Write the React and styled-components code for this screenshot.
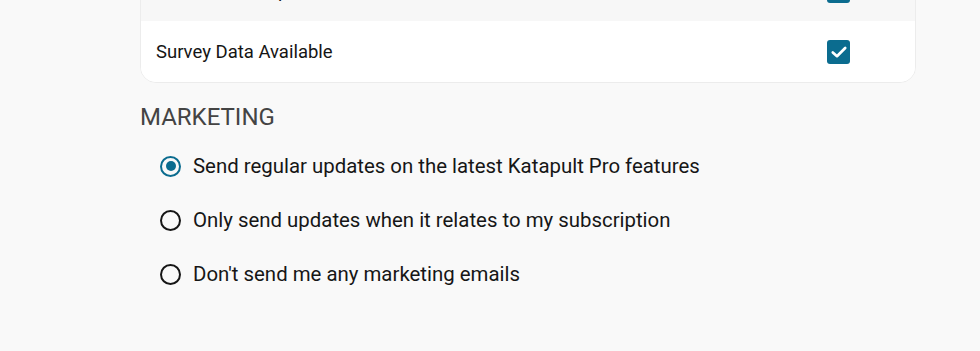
import React, { useState } from 'react'
import styled, { createGlobalStyle } from 'styled-components'

const Global = createGlobalStyle`
  html, body {
    margin: 0;
    padding: 0;
    background: #f9f9f9;
    font-family: Roboto, "Liberation Sans", Arial, sans-serif;
    overflow: hidden;
  }
`

const accent = '#0b6c8f'

const Page = styled.div`
  width: 980px;
  height: 351px;
  padding-left: 140px;
  box-sizing: border-box;
  overflow: hidden;
`

const Card = styled.div`
  width: 774px;
  margin-top: -41px;
  background: #fff;
  border: 1px solid #ececec;
  border-radius: 16px;
  overflow: hidden;
`

const Row = styled.div`
  display: flex;
  align-items: center;
  justify-content: space-between;
  height: 61px;
  padding: 0 65px 0 15px;
  background: ${p => (p.$shaded ? '#f7f7f7' : '#fff')};
  font-size: 18.5px;
  color: #151515;
`

const Box = styled.span`
  display: flex;
  align-items: center;
  justify-content: center;
  width: 23px;
  height: 24px;
  border-radius: 3px;
  background: ${accent};
`

const Heading = styled.h2`
  margin: 20px 0 8px;
  font-size: 24px;
  line-height: 28px;
  font-weight: 400;
  color: #444;
`

const Options = styled.div`
  display: flex;
  flex-direction: column;
  padding-left: 20px;
`

const Option = styled.label`
  display: flex;
  align-items: center;
  gap: 12px;
  height: 54px;
  font-size: 20.4px;
  color: #161616;
  cursor: pointer;
`

const Radio = styled.span`
  display: flex;
  align-items: center;
  justify-content: center;
  width: 21px;
  height: 21px;
  box-sizing: border-box;
  border-radius: 50%;
  border: 2.5px solid ${p => (p.$on ? accent : '#161616')};

  &::after {
    content: '';
    width: 10px;
    height: 10px;
    border-radius: 50%;
    background: ${accent};
    display: ${p => (p.$on ? 'block' : 'none')};
  }
`

const Check = () => (
  <Box>
    <svg width="18" height="18" viewBox="0 0 18 18">
      <path d="M2.8 9.4 L7 13.2 L15.2 5" fill="none" stroke="#fff" strokeWidth="2.7" strokeLinecap="round" strokeLinejoin="round" />
    </svg>
  </Box>
)

const options = [
  'Send regular updates on the latest Katapult Pro features',
  'Only send updates when it relates to my subscription',
  "Don't send me any marketing emails",
]

export default function App() {
  const [choice, setChoice] = useState(0)
  return (
    <Page>
      <Global />
      <Card>
        <Row $shaded>
          <span>Attachment Report</span>
          <Check />
        </Row>
        <Row>
          <span>Survey Data Available</span>
          <Check />
        </Row>
      </Card>
      <Heading>MARKETING</Heading>
      <Options>
        {options.map((text, i) => (
          <Option key={i} onClick={() => setChoice(i)}>
            <Radio $on={choice === i} />
            {text}
          </Option>
        ))}
      </Options>
    </Page>
  )
}
